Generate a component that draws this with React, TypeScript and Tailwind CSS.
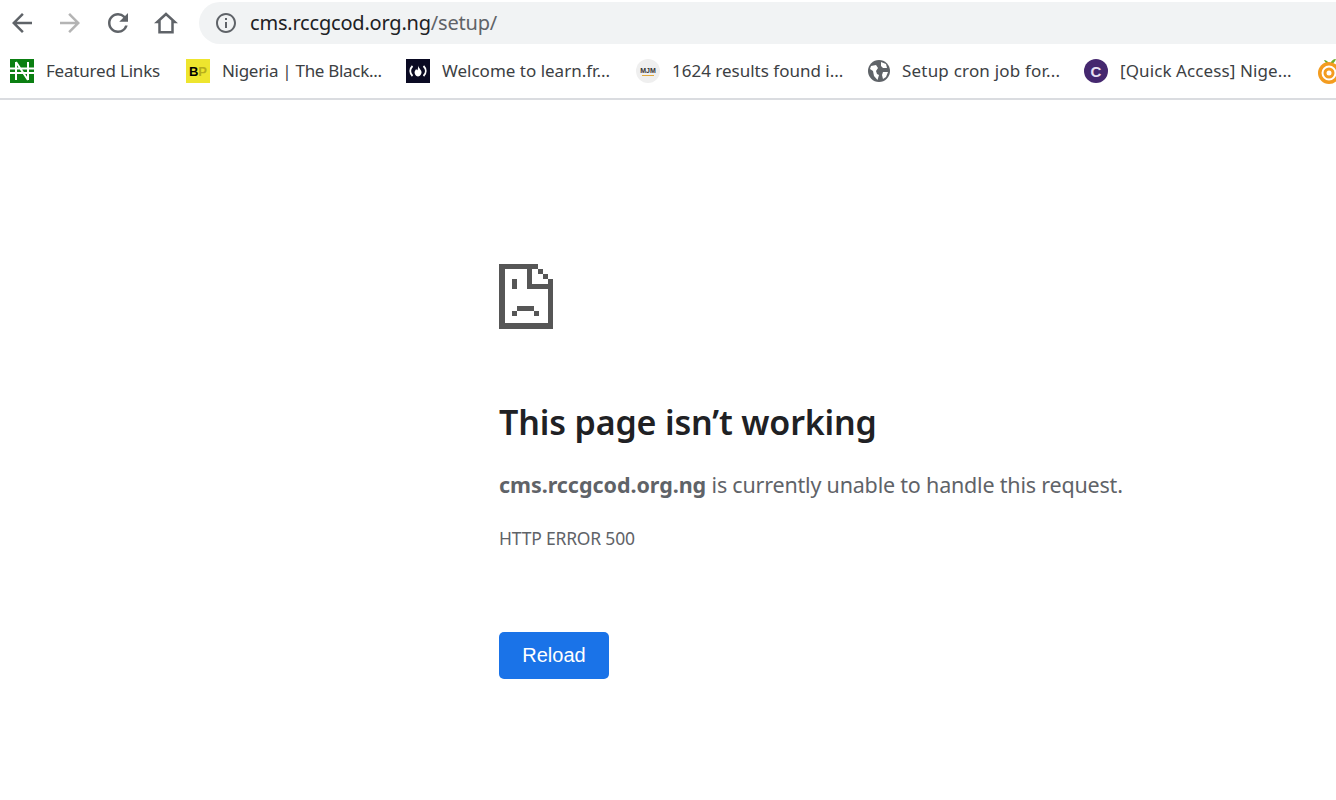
const uiFont = "font-['Noto_Sans',sans-serif]";

function BackIcon() {
  return (
    <svg width="30" height="30" viewBox="0 0 24 24" fill="#5f6368">
      <path d="M20 11H7.83l5.59-5.59L12 4l-8 8 8 8 1.41-1.41L7.83 13H20v-2z" />
    </svg>
  );
}

function ForwardIcon() {
  return (
    <svg width="30" height="30" viewBox="0 0 24 24" fill="#b4b4b4">
      <path d="M4 11h12.17l-5.59-5.59L12 4l8 8-8 8-1.41-1.41L16.17 13H4v-2z" />
    </svg>
  );
}

function ReloadIcon() {
  return (
    <svg width="30" height="30" viewBox="0 0 24 24" fill="#5f6368">
      <path d="M17.65 6.35A7.958 7.958 0 0012 4c-4.42 0-7.99 3.58-7.99 8s3.57 8 7.99 8c3.73 0 6.84-2.55 7.73-6h-2.08A5.99 5.99 0 0112 18c-3.31 0-6-2.69-6-6s2.69-6 6-6c1.66 0 3.14.69 4.22 1.78L13 11h7V4l-2.35 2.35z" />
    </svg>
  );
}

function HomeIcon() {
  return (
    <svg width="30" height="30" viewBox="0 0 24 24" fill="none" stroke="#5f6368" strokeWidth="2">
      <path d="M12 4.8L5 11.2H6.8V19.4H17.2V11.2H19Z" />
    </svg>
  );
}

function InfoIcon() {
  return (
    <svg width="24" height="24" viewBox="0 0 24 24" fill="#5f6368">
      <path d="M11 7h2v2h-2zm0 4h2v6h-2zm1-9C6.48 2 2 6.48 2 12s4.48 10 10 10 10-4.48 10-10S17.52 2 12 2zm0 18c-4.41 0-8-3.59-8-8s3.59-8 8-8 8 3.59 8 8-3.59 8-8 8z" />
    </svg>
  );
}

function ErrorIcon() {
  return (
    <svg width="54" height="65" viewBox="0 0 54 65" fill="#565656" className="block">
      <path d="M0 0H39V5H33V20H54V65H0ZM6 5V59H49V25H28V5Z" fillRule="evenodd" />
      <rect x="39" y="5" width="5" height="5" />
      <rect x="44" y="10" width="5" height="5" />
      <rect x="49" y="15" width="5" height="5" />
      <rect x="13" y="15" width="5" height="10" />
      <rect x="18" y="42" width="17" height="5" />
      <rect x="13" y="47" width="5" height="5" />
      <rect x="35" y="47" width="5" height="5" />
    </svg>
  );
}

function NairaIcon() {
  return (
    <svg width="24" height="24" viewBox="0 0 24 24">
      <rect width="24" height="24" fill="#0b7f12" />
      <path d="M6 3V21M18 3V21M6 3L18 21M0 9.5H24M0 14H24" stroke="#fff" strokeWidth="2" fill="none" />
    </svg>
  );
}

function BpIcon() {
  return (
    <div className="w-6 h-6 bg-[#eee52e] flex items-center justify-center text-[13px] font-bold font-['Liberation_Sans',sans-serif] leading-none">
      <span className="text-black">B</span>
      <span className="text-[#b7ad1c]">P</span>
    </div>
  );
}

function FccIcon() {
  return (
    <svg width="24" height="24" viewBox="0 0 24 24">
      <rect width="24" height="24" fill="#0a0a23" />
      <path d="M6.5 7C3.5 10 3.5 14 6.5 17M17.5 7C20.5 10 20.5 14 17.5 17" stroke="#fff" strokeWidth="1.8" fill="none" />
      <path d="M12 6.5C13 10 16 11 15.5 14C15 16.5 13 17.5 12 17.5C11 17.5 9 16.5 8.6 14C8.3 12 9.6 11 10.2 10C10.7 10.8 11 11.2 11.4 11.2C12 10.2 12.2 8.2 12 6.5Z" fill="#fff" />
    </svg>
  );
}

function MjmIcon() {
  return (
    <div className="w-6 h-6 rounded-full bg-[#efefef] flex flex-col items-center justify-center leading-none">
      <span className="text-[7px] font-bold text-[#333] font-['Liberation_Sans',sans-serif] leading-[7px]">MJM</span>
      <span className="w-3 h-px bg-[#e0a83a] mt-px"></span>
    </div>
  );
}

function GlobeIcon() {
  return (
    <svg width="22" height="24" viewBox="0 0 22 24">
      <circle cx="11" cy="12" r="11" fill="#5f6368" />
      <path d="M3 7L8 6L10 9L8 12L9 15L11 16L9.5 21L6 17L5 12L2 10Z M13 3L18 5L19 9L15 9L13 7Z M15 13L20 13L18 18L15 20L14 16Z" fill="#fff" />
    </svg>
  );
}

function CircleCIcon() {
  return (
    <div className="w-6 h-6 rounded-full bg-[#45286f] flex items-center justify-center text-[#e8e0f2] text-[15px] font-bold font-['Liberation_Sans',sans-serif] leading-none">
      C
    </div>
  );
}

function OrangeIcon() {
  return (
    <svg width="24" height="26" viewBox="0 0 24 26">
      <path d="M12 6C11 3 9 2 7 2C8 4 9 6 12 6ZM13 6C14 3 16 1 19 1C18 4 16 6 13 6Z" fill="#6fae2e" />
      <circle cx="12" cy="15" r="11" fill="#f39c1f" />
      <circle cx="12" cy="15" r="6.5" fill="none" stroke="#fff" strokeWidth="2" />
      <circle cx="12" cy="15" r="2.5" fill="#fff" />
    </svg>
  );
}

const bookmarks = [
  { icon: <NairaIcon />, label: 'Featured Links', width: 'w-[176px]', tracking: 'tracking-[-0.2px]' },
  { icon: <BpIcon />, label: 'Nigeria | The Black...', width: 'w-[220px]', tracking: 'tracking-[-0.3px]' },
  { icon: <FccIcon />, label: 'Welcome to learn.fr...', width: 'w-[230px]', tracking: 'tracking-normal' },
  { icon: <MjmIcon />, label: '1624 results found i...', width: 'w-[232px]', tracking: 'tracking-normal' },
  { icon: <GlobeIcon />, label: 'Setup cron job for...', width: 'w-[216px]', tracking: 'tracking-[0.2px]' },
  { icon: <CircleCIcon />, label: '[Quick Access] Nige...', width: 'w-[233px]', tracking: 'tracking-[0.1px]' },
];

export default function App() {
  return (
    <div className={`h-[800px] w-[1336px] overflow-hidden bg-white ${uiFont}`}>
      {/* toolbar */}
      <div className="h-[46px] flex items-center pl-[7px]">
        <div className="flex items-center gap-[18px]">
          <BackIcon />
          <ForwardIcon />
          <ReloadIcon />
          <HomeIcon />
        </div>
        <div className="ml-[18px] h-[42px] flex-1 -mr-10 rounded-l-full bg-[#f1f3f4] flex items-center pl-[15px]">
          <InfoIcon />
          <span className="ml-[12px] text-[20px] tracking-[-0.2px] text-[#202124]">
            cms.rccgcod.org.ng<span className="text-[#5f6368]">/setup/</span>
          </span>
        </div>
      </div>

      {/* bookmarks bar */}
      <div className="h-[54px] flex items-center pl-[10px] pb-[2px] border-b-2 border-[#dadce0]">
        {bookmarks.map((b) => (
          <div key={b.label} className={`flex items-center gap-[12px] shrink-0 ${b.width}`}>
            {b.icon}
            <span className={`text-[17px] text-[#3c4043] whitespace-nowrap ${b.tracking}`}>{b.label}</span>
          </div>
        ))}
        <div className="shrink-0">
          <OrangeIcon />
        </div>
      </div>

      {/* error page */}
      <div className="pl-[499px] pt-[164px]">
        <ErrorIcon />
        <h1 className="mt-[69px] text-[34px] leading-[48px] font-semibold tracking-[-0.15px] text-[#202124]">
          This page isn’t working
        </h1>
        <p className="mt-[24px] text-[21.5px] leading-[30px] tracking-[-0.2px] text-[#5f6368]">
          <span className="font-bold tracking-[-0.05px]">cms.rccgcod.org.ng</span> is currently unable to handle this request.
        </p>
        <div className="mt-[26px] text-[17.5px] leading-[24px] tracking-[-0.2px] text-[#5f6368]">HTTP ERROR 500</div>
        <button className="mt-[82px] h-[47px] w-[110px] pb-[2px] rounded-[5px] bg-[#1a73e8] text-white text-[20px] font-['Liberation_Sans',sans-serif]">
          Reload
        </button>
      </div>
    </div>
  );
}
